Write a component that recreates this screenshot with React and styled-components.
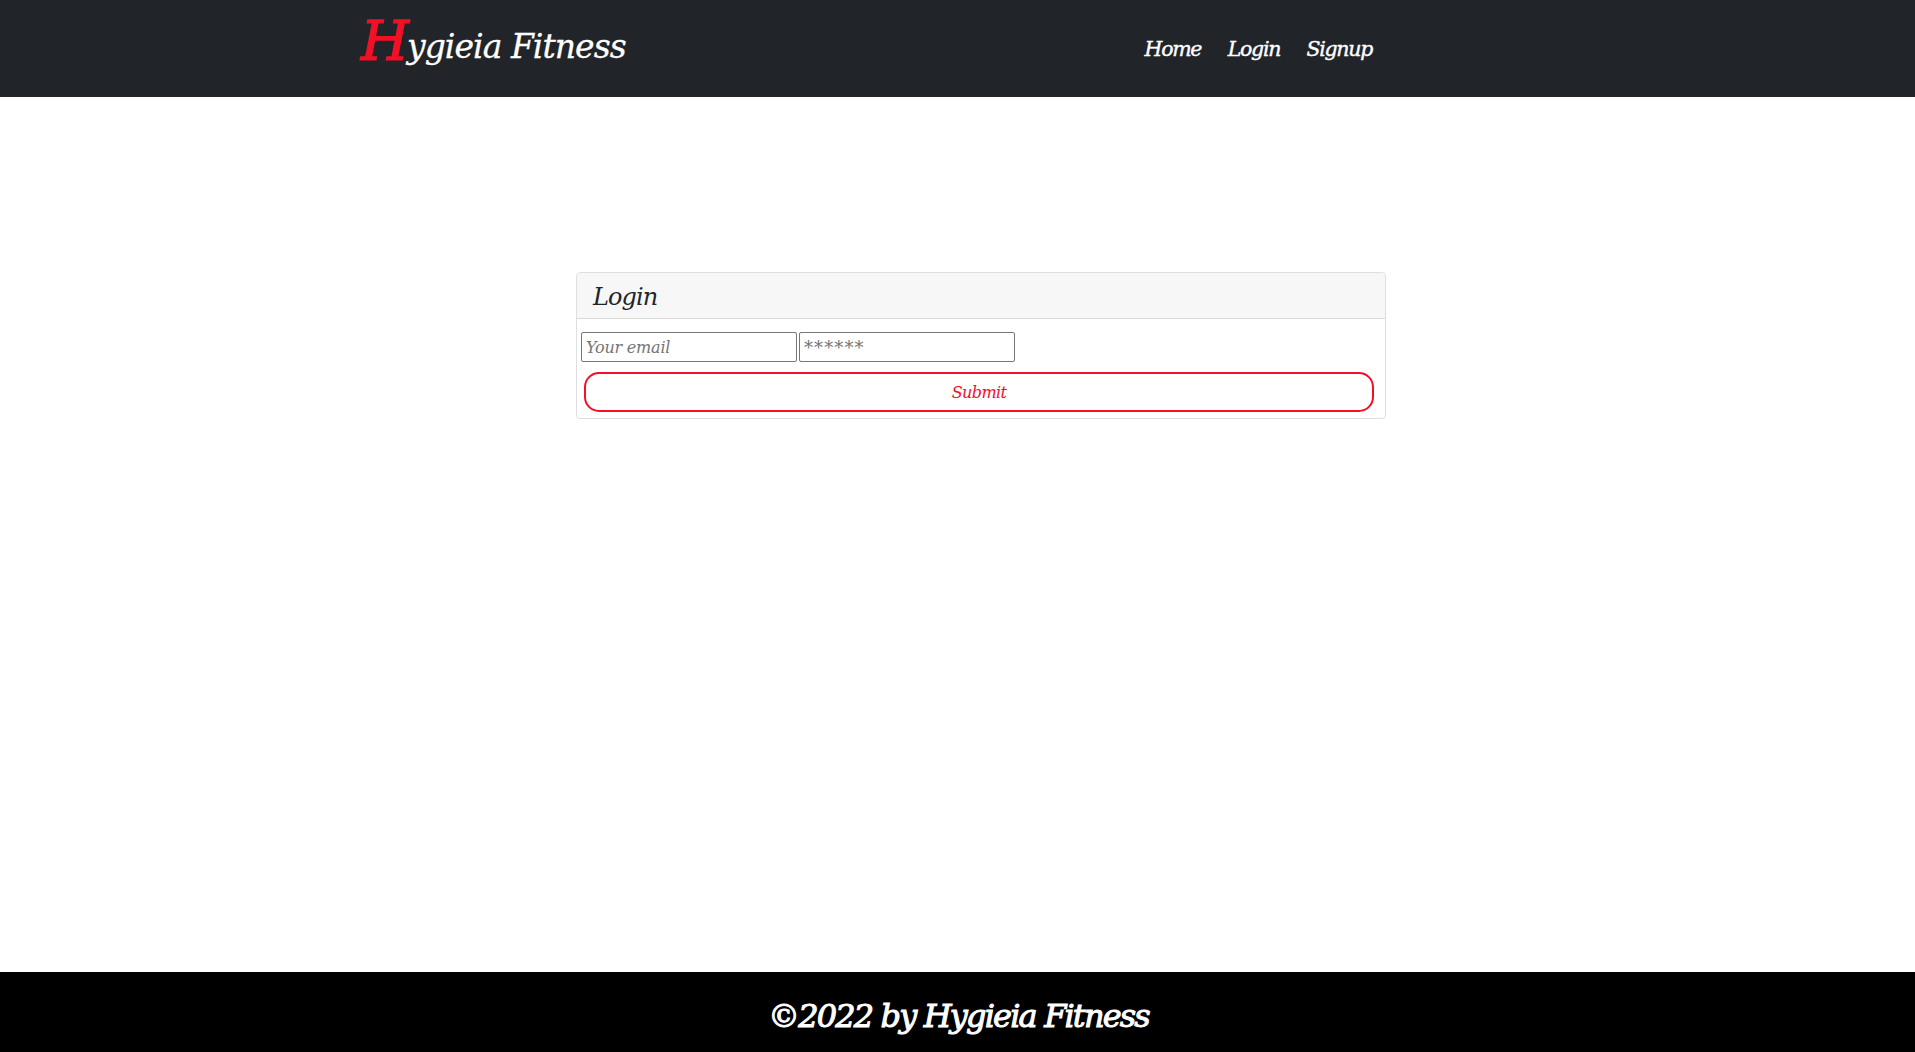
import React from "react";
import styled, { createGlobalStyle } from "styled-components";

const Global = createGlobalStyle`
  *, *::before, *::after { box-sizing: border-box; }
  body {
    margin: 0;
    background: #fff;
    color: #212529;
    font-family: "DejaVu Serif", serif;
    font-style: italic;
    font-size: 16px;
  }
`;

const Page = styled.div`
  display: flex;
  flex-direction: column;
  height: 1052px;
  overflow: hidden;
`;

const Header = styled.header`
  display: flex;
  justify-content: space-between;
  height: 97px;
  padding: 0 543px 0 361px;
  background: #212529;
  color: #fff;
  white-space: nowrap;
`;

const Brand = styled.a`
  display: flex;
  align-items: baseline;
  height: 78px;
  line-height: 78px;
  font-size: 33px;
  letter-spacing: -0.95px;
  -webkit-text-stroke: 0.3px currentColor;
`;

const Initial = styled.span`
  position: relative;
  top: 1.5px;
  width: 46px;
  color: #f31027;
  font-size: 55px;
  letter-spacing: 0;
  -webkit-text-stroke: 1.4px currentColor;
`;

const Nav = styled.nav`
  display: flex;
  align-items: center;
  gap: 26.5px;
  height: 97px;
`;

const NavLink = styled.a`
  font-size: 20.5px;
  letter-spacing: -1.3px;
  -webkit-text-stroke: 0.4px currentColor;
`;

const Main = styled.main`
  flex: 1;
  padding: 175px 0 0 576px;
`;

const Card = styled.section`
  width: 810px;
  height: 147px;
  border: 1px solid #dfdfdf;
  border-radius: 4px;
`;

const CardTitle = styled.h4`
  height: 46px;
  margin: 0;
  padding-left: 16px;
  border-bottom: 1px solid #dadada;
  border-radius: 3px 3px 0 0;
  background: #f7f7f7;
  font-size: 24px;
  font-weight: 400;
  line-height: 49px;
  letter-spacing: -0.9px;
`;

const Form = styled.form`
  display: flex;
  flex-direction: column;
  gap: 10px;
  padding: 13px 11px 0 4px;
`;

const Fields = styled.div`
  display: flex;
  gap: 2px;
`;

const Field = styled.input`
  width: 216px;
  height: 30px;
  padding: 1px 4px;
  border: 1px solid #767676;
  border-radius: 2px;
  font: inherit;
  font-size: ${(p) => p.$size};
  letter-spacing: ${(p) => p.$spacing};
  &::placeholder { color: #757575; opacity: 1; }
`;

const Submit = styled.button`
  height: 40px;
  margin-left: 3px;
  border: 2px solid #f31027;
  border-radius: 15px;
  background: #fff;
  color: #f31027;
  font: inherit;
  letter-spacing: -0.6px;
`;

const Footer = styled.footer`
  display: flex;
  justify-content: center;
  height: 80px;
  padding-left: 2px;
  background: #000;
  color: #fff;
  font-size: 32px;
  line-height: 88px;
  letter-spacing: -1.85px;
  white-space: nowrap;
  -webkit-text-stroke: 1px currentColor;
`;

export default function App() {
  return (
    <Page>
      <Global />
      <Header>
        <Brand><Initial>H</Initial>ygieia Fitness</Brand>
        <Nav>
          <NavLink>Home</NavLink>
          <NavLink>Login</NavLink>
          <NavLink>Signup</NavLink>
        </Nav>
      </Header>
      <Main>
        <Card>
          <CardTitle>Login</CardTitle>
          <Form>
            <Fields>
              <Field type="email" placeholder="Your email" $size="16px" $spacing="-0.2px" />
              <Field type="password" placeholder="******" $size="18px" $spacing="1.1px" />
            </Fields>
            <Submit type="button">Submit</Submit>
          </Form>
        </Card>
      </Main>
      <Footer>©2022 by Hygieia Fitness</Footer>
    </Page>
  );
}
